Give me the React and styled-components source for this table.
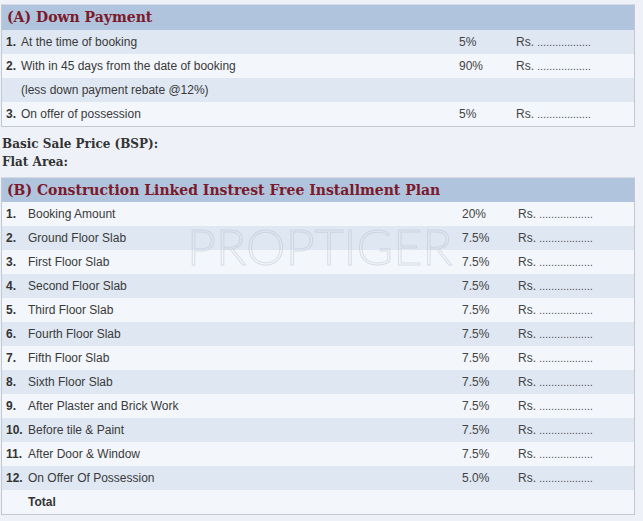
import styled, { createGlobalStyle } from "styled-components"

const downPayment = [
    { no: "1.", text: "At the time of booking", pct: "5%", rs: true },
    { no: "2.", text: "With in 45 days from the date of booking", pct: "90%", rs: true },
    { no: "", text: "(less down payment rebate @12%)", pct: "", rs: false },
    { no: "3.", text: "On offer of possession", pct: "5%", rs: true },
]

const installments = [
    ["Booking Amount", "20%"],
    ["Ground Floor Slab", "7.5%"],
    ["First Floor Slab", "7.5%"],
    ["Second Floor Slab", "7.5%"],
    ["Third Floor Slab", "7.5%"],
    ["Fourth Floor Slab", "7.5%"],
    ["Fifth Floor Slab", "7.5%"],
    ["Sixth Floor Slab", "7.5%"],
    ["After Plaster and Brick Work", "7.5%"],
    ["Before tile & Paint", "7.5%"],
    ["After Door & Window", "7.5%"],
    ["On Offer Of Possession", "5.0%"],
]

export default function App() {
    return (
        <Page>
            <GlobalStyle />
            <Table>
                <Header $h={25}>(A) Down Payment</Header>
                {downPayment.map((r, i) => (
                    <Row key={i} $cols="15px 1fr 57px 118px" $dark={i % 2 === 0}>
                        <Num>{r.no}</Num>
                        <span>{r.text}</span>
                        <Cell>{r.pct}</Cell>
                        <Cell>{r.rs && <>Rs. <Dots>..................</Dots></>}</Cell>
                    </Row>
                ))}
            </Table>

            <Info>
                <div>Basic Sale Price (BSP):</div>
                <div>Flat Area:</div>
            </Info>

            <Table>
                <Header $h={24}>(B) Construction Linked Instrest Free Installment Plan</Header>
                {installments.map(([text, pct], i) => (
                    <Row key={i} $cols="22px 1fr 56px 116px" $dark={i % 2 === 1}>
                        <Num>{i + 1}.</Num>
                        <span>{text}</span>
                        <Cell>{pct}</Cell>
                        <Cell>Rs. <Dots>..................</Dots></Cell>
                    </Row>
                ))}
                <Row $cols="22px 1fr 56px 116px" $dark={false}>
                    <span />
                    <Num>Total</Num>
                    <span />
                    <span />
                </Row>
                <Watermark>PROPTIGER</Watermark>
            </Table>
        </Page>
    )
}

const GlobalStyle = createGlobalStyle`
    body {
        margin: 0;
        background-color: #eef2f8;
        font-family: "Liberation Sans", Arial, sans-serif;
        color: #333;
    }
`
const Page = styled.div`
    padding: 4px 0 0 1px;
    width: 634px;
`
const Table = styled.div`
    position: relative;
    border: 1px solid #c3c7ce;
    border-top-color: #d6dbe3;
    overflow: hidden;
`
const Header = styled.div`
    height: ${(p) => p.$h}px;
    line-height: ${(p) => p.$h}px;
    padding-left: 5px;
    background-color: #b0c4de;
    color: #7a1a2b;
    font-family: "DejaVu Serif", serif;
    font-weight: bold;
    font-size: 14px;
    white-space: nowrap;
`
const Row = styled.div`
    display: grid;
    grid-template-columns: ${(p) => p.$cols};
    align-items: center;
    height: 24px;
    padding-left: 4px;
    font-size: 12px;
    color: #3a3a3a;
    background-color: ${(p) => (p.$dark ? "#dfe7f2" : "#f3f6fa")};
    white-space: nowrap;
`
const Num = styled.span`
    font-weight: bold;
    color: #333;
`
const Cell = styled.span`
    color: #444;
`
const Dots = styled.span`
    font-size: 10px;
    letter-spacing: 0.2px;
`
const Info = styled.div`
    margin: 8px 0 6px;
    padding-left: 1px;
    font-family: "DejaVu Serif", serif;
    font-weight: bold;
    font-size: 12px;
    line-height: 18px;
    color: #333;
`
const Watermark = styled.div`
    position: absolute;
    top: 38px;
    left: 185px;
    font-family: Lato, sans-serif;
    font-weight: 300;
    font-size: 50px;
    line-height: 60px;
    color: transparent;
    -webkit-text-stroke: 1px rgba(175, 185, 200, 0.4);
    pointer-events: none;
`
